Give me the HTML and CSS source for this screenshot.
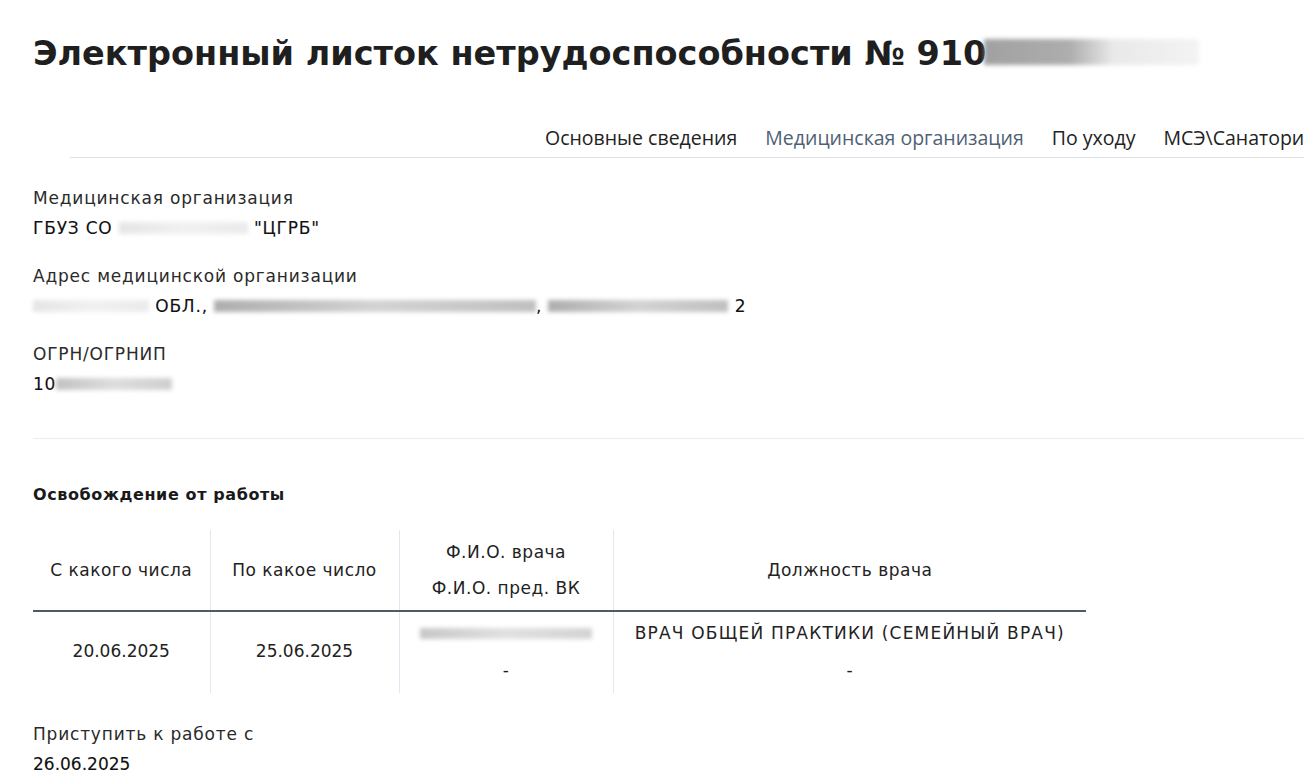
FILE: index.html
```html
<!DOCTYPE html>
<html lang="ru">
  <head>
    <meta charset="UTF-8" />
    <meta name="viewport" content="width=device-width, initial-scale=1.0" />
    <title>Электронный листок нетрудоспособности</title>
    <link rel="stylesheet" href="styles.css">
  </head>
  <body>
    <div id="page">
      <h1 class="page-title">
        Электронный листок нетрудоспособности № 910<span class="blur blur-title"></span>
      </h1>

      <div class="tabs">
        <div class="tabs-list">
          <span class="tab">Основные сведения</span>
          <span class="tab active">Медицинская организация</span>
          <span class="tab">По уходу</span>
          <span class="tab">МСЭ\Санаторий</span>
        </div>
      </div>

      <div class="field">
        <div class="field-label">Медицинская организация</div>
        <div class="field-value">ГБУЗ СО <span class="blur blur-org"></span> "ЦГРБ"</div>
      </div>
      <div class="field">
        <div class="field-label">Адрес медицинской организации</div>
        <div class="field-value"><span class="blur blur-region"></span> ОБЛ., <span class="blur blur-addr1"></span>, <span class="blur blur-addr2"></span> 2</div>
      </div>
      <div class="field">
        <div class="field-label">ОГРН/ОГРНИП</div>
        <div class="field-value">10<span class="blur blur-ogrn"></span></div>
      </div>

      <hr class="divider" />

      <h3 class="section-title">Освобождение от работы</h3>

      <table class="release-table">
        <thead>
          <tr>
            <th class="col-from">С какого числа</th>
            <th class="col-to">По какое число</th>
            <th class="col-doctor">
              <div>Ф.И.О. врача</div>
              <div>Ф.И.О. пред. ВК</div>
            </th>
            <th class="col-position">Должность врача</th>
          </tr>
        </thead>
        <tbody>
          <tr>
            <td class="date">20.06.2025</td>
            <td class="date">25.06.2025</td>
            <td>
              <div><span class="blur blur-name"></span></div>
              <div>-</div>
            </td>
            <td>
              <div class="caps">ВРАЧ ОБЩЕЙ ПРАКТИКИ (СЕМЕЙНЫЙ ВРАЧ)</div>
              <div>-</div>
            </td>
          </tr>
        </tbody>
      </table>

      <div class="field field-last">
        <div class="field-label">Приступить к работе с</div>
        <div class="field-value date">26.06.2025</div>
      </div>
    </div>
  </body>
</html>
```

FILE: styles.css
```css
* {
  box-sizing: border-box;
  margin: 0;
  padding: 0;
}

body {
  font-family: "DejaVu Sans", "Open Sans", sans-serif;
  background-color: #fff;
  color: #222;
  overflow: hidden;
}

#page {
  padding: 32px 0 0 33px;
  width: 1304px;
}

.page-title {
  font-size: 33.5px;
  font-weight: 700;
  color: #1f1f1f;
  line-height: 44px;
  white-space: nowrap;
}

/* redacted (blurred) fragments */
.blur {
  display: inline-block;
  height: 0.7em;
  background: linear-gradient(90deg, #9a9a9a, #c8c8c8 50%, #b0b0b0);
  filter: blur(2px);
  vertical-align: baseline;
  opacity: 0.8;
}

.blur-title {
  width: 215px;
  height: 26px;
  margin-left: -2px;
  background: linear-gradient(90deg, #8a8a8a, #9a9a9a 40%, #e4e4e4 60%, #f1f1f1);
}

.blur-org { width: 129px; opacity: 0.25; }
.blur-region { width: 116px; opacity: 0.25; }
.blur-addr1 { width: 322px; }
.blur-addr2 { width: 180px; }
.blur-ogrn { width: 116px; opacity: 0.6; }
.blur-name { width: 172px; height: 11px; opacity: 0.55; }

.tabs {
  margin: 43px 0 0 37px;
  border-bottom: 1px solid #dfe2e8;
  overflow: hidden;
}

.tabs-list {
  display: flex;
  gap: 28px;
  padding-left: 475px;
  white-space: nowrap;
}

.tab {
  font-family: "Open Sans", Roboto, sans-serif;
  font-size: 19.5px;
  line-height: 38px;
  color: #222;
}

.tab.active {
  color: #4f5f74;
}

.field {
  margin-top: 29px;
}

.field + .field {
  margin-top: 26px;
}

.field-label {
  font-size: 17px;
  letter-spacing: 0.8px;
  line-height: 22px;
  color: #2a2a2a;
}

.field-value {
  font-size: 17px;
  letter-spacing: 0.8px;
  line-height: 22px;
  margin-top: 8px;
  color: #111;
  -webkit-text-stroke: 0.1px #111;
  white-space: nowrap;
}

.divider {
  border: none;
  border-top: 1px solid #ececec;
  margin-top: 43px;
}

.section-title {
  font-size: 16px;
  letter-spacing: 0.6px;
  font-weight: 700;
  margin-top: 45px;
  line-height: 22px;
  color: #1a1a1a;
}

.release-table {
  border-collapse: collapse;
  margin-top: 24px;
  width: 1053px;
  text-align: center;
  font-size: 17px;
  letter-spacing: 0.5px;
  color: #222;
}

.release-table th {
  font-weight: 400;
  height: 81px;
  border-bottom: 2px solid #4d5b68;
  line-height: 36px;
}

.release-table th,
.release-table td {
  border-left: 1px solid #e1e6ef;
  padding: 0 12px;
}

.release-table th:first-child,
.release-table td:first-child {
  border-left: none;
}

.release-table td {
  height: 82px;
  line-height: 37px;
  padding-bottom: 2px;
}

.release-table .date,
.field-value.date {
  letter-spacing: 0;
}

.caps {
  letter-spacing: 1.2px;
}

.col-from { width: 177px; }
.col-to { width: 189px; }
.col-doctor { width: 214px; }

.field-last {
  margin-top: 30px;
}
```
